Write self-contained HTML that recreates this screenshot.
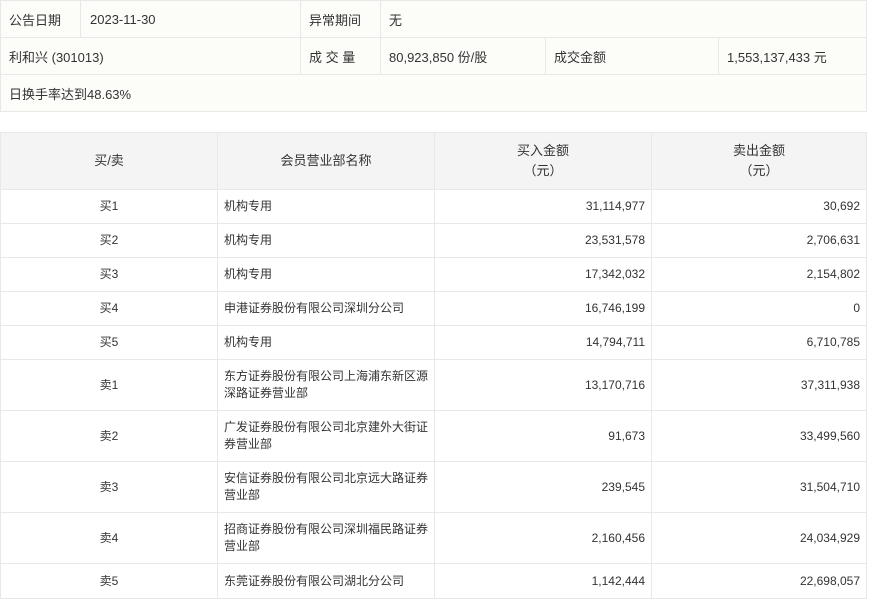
<!DOCTYPE html>
<html><head><meta charset="utf-8"><style>
*{margin:0;padding:0;box-sizing:border-box}
body{width:872px;height:595px;overflow:hidden;background:#fff;font-family:"Liberation Sans","Noto Sans CJK SC",sans-serif;color:#333}
table{border-collapse:collapse;position:absolute;left:0}
td{border:1px solid #e8e8e8}
#t1{top:0;width:867px;background:#fcfcf9;font-size:13px}
#t1 td{height:37px;padding-left:8px}
#t2{top:132px;width:867px;font-size:12px}
#t2 td{padding:0 6px;line-height:17px}
#t2 thead td{background:#f4f4f4;height:57px;text-align:center;font-size:13px;line-height:20px}
#t2 .c{text-align:center}
#t2 .r{text-align:right}
</style></head><body>
<table id="t1">
<tr><td style="width:80px">公告日期</td><td style="width:220px;padding-left:9px">2023-11-30</td><td style="width:80px">异常期间</td><td colspan="3">无</td></tr>
<tr><td colspan="2">利和兴 (301013)</td><td>成 交 量</td><td style="width:165px">80,923,850 份/股</td><td style="width:173px">成交金额</td><td>1,553,137,433 元</td></tr>
<tr><td colspan="6">日换手率达到48.63%</td></tr>
</table>
<table id="t2">
<thead><tr><td style="width:217px">买/卖</td><td style="width:217px">会员营业部名称</td><td style="width:217px">买入金额<br>（元）</td><td>卖出金额<br>（元）</td></tr></thead>
<tbody>
<tr style="height:34px"><td class="c">买1</td><td>机构专用</td><td class="r">31,114,977</td><td class="r">30,692</td></tr>
<tr style="height:34px"><td class="c">买2</td><td>机构专用</td><td class="r">23,531,578</td><td class="r">2,706,631</td></tr>
<tr style="height:34px"><td class="c">买3</td><td>机构专用</td><td class="r">17,342,032</td><td class="r">2,154,802</td></tr>
<tr style="height:34px"><td class="c">买4</td><td>申港证券股份有限公司深圳分公司</td><td class="r">16,746,199</td><td class="r">0</td></tr>
<tr style="height:34px"><td class="c">买5</td><td>机构专用</td><td class="r">14,794,711</td><td class="r">6,710,785</td></tr>
<tr style="height:51px"><td class="c">卖1</td><td>东方证券股份有限公司上海浦东新区源深路证券营业部</td><td class="r">13,170,716</td><td class="r">37,311,938</td></tr>
<tr style="height:51px"><td class="c">卖2</td><td>广发证券股份有限公司北京建外大街证券营业部</td><td class="r">91,673</td><td class="r">33,499,560</td></tr>
<tr style="height:51px"><td class="c">卖3</td><td>安信证券股份有限公司北京远大路证券营业部</td><td class="r">239,545</td><td class="r">31,504,710</td></tr>
<tr style="height:51px"><td class="c">卖4</td><td>招商证券股份有限公司深圳福民路证券营业部</td><td class="r">2,160,456</td><td class="r">24,034,929</td></tr>
<tr style="height:35px"><td class="c">卖5</td><td>东莞证券股份有限公司湖北分公司</td><td class="r">1,142,444</td><td class="r">22,698,057</td></tr>
</tbody></table>
</body></html>
